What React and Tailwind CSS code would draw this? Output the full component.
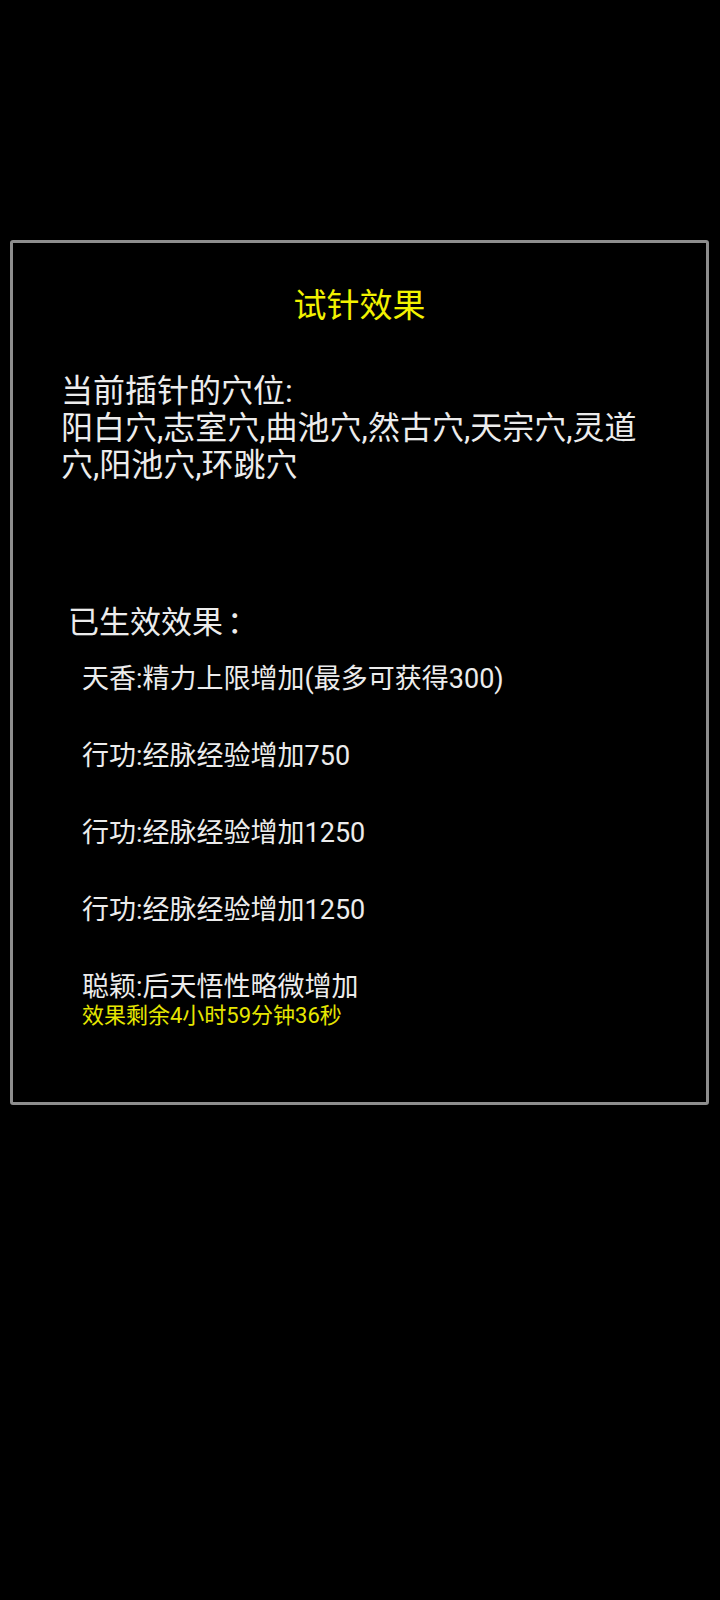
import React from "react";

const effects = [
  { text: "天香:精力上限增加(最多可获得300)" },
  { text: "行功:经脉经验增加750" },
  { text: "行功:经脉经验增加1250" },
  { text: "行功:经脉经验增加1250" },
  { text: "聪颖:后天悟性略微增加", timer: "效果剩余4小时59分钟36秒" },
];

export default function App() {
  return (
    <div
      className="w-[720px] min-h-[1600px] bg-black pt-[240px] px-[10px]"
      style={{ fontFamily: 'Roboto, "Noto Sans CJK SC", sans-serif' }}
    >
      <div className="w-[699px] h-[865px] border-[3px] border-[#8e8e8e] rounded-[3px] flex flex-col">
        <h1 className="mt-[43px] text-center text-[33px] leading-[40px] text-[#f2f200]">
          试针效果
        </h1>

        <p className="mt-[47px] ml-[48px] w-[600px] text-[32px] leading-[37px] text-[#ececec]">
          当前插针的穴位:
          <br />
          阳白穴,志室穴,曲池穴,然古穴,天宗穴,灵道穴,阳池穴,环跳穴
        </p>

        <h2 className="mt-[121px] ml-[55px] text-[31px] leading-[36px] text-[#ececec]">
          已生效效果<span className="ml-[4px]">：</span>
        </h2>

        <div className="mt-[22px] ml-[69px] flex flex-col gap-[45px]">
          {effects.map((e, i) => (
            <div key={i} className="flex flex-col">
              <span className="text-[27px] leading-[32px] text-[#ececec]">{e.text}</span>
              {e.timer && (
                <span className="text-[22px] leading-[26px] text-[#e6e600]">{e.timer}</span>
              )}
            </div>
          ))}
        </div>
      </div>
    </div>
  );
}
